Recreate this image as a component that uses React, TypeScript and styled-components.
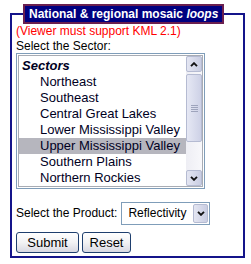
import React from "react";
import styled, { createGlobalStyle } from "styled-components";

const Global = createGlobalStyle`
  html, body { margin: 0; padding: 0; background: #fff; }
  body { font-family: "Liberation Sans", Arial, sans-serif; color: #000; }
`;

const Page = styled.div`
  box-sizing: border-box;
  width: 251px;
  height: 264px;
  padding: 4px 0 0 10px;
`;

const Frame = styled.fieldset`
  box-sizing: border-box;
  width: 235px;
  margin: 0;
  padding: 0 4px 3px 4px;
  border: 2px solid #14148a;
  min-inline-size: 0;
`;

const Legend = styled.legend`
  box-sizing: border-box;
  height: 20px;
  margin-left: 7px;
  padding: 0 4px;
  background: #000080;
  border: 2px solid #6b1f4f;
  color: #fff;
  font-weight: bold;
  font-size: 12px;
  line-height: 16px;
  white-space: nowrap;
`;

const Note = styled.div<{ $tone?: "warn"; $lh?: number }>`
  font-size: 12px;
  line-height: ${(p) => p.$lh ?? 15}px;
  color: ${(p) => (p.$tone === "warn" ? "#f00" : "#000")};
`;

const ListBox = styled.div`
  box-sizing: border-box;
  width: 189px;
  height: 136px;
  border: 1px solid #7f9db9;
  padding: 1px;
  display: flex;
`;

const ListInner = styled.div`
  flex: 1;
  display: flex;
  border: 1px solid #a8acb4;
  min-width: 0;
`;

const Rows = styled.div`
  flex: 1;
  padding-top: 2px;
  overflow: hidden;
`;

const Row = styled.div<{ $kind?: "group" | "item"; $selected?: boolean }>`
  height: 16px;
  line-height: 16px;
  font-size: 13px;
  white-space: nowrap;
  padding-left: ${(p) => (p.$kind === "group" ? "3px" : "21px")};
  font-weight: ${(p) => (p.$kind === "group" ? "bold" : "normal")};
  font-style: ${(p) => (p.$kind === "group" ? "italic" : "normal")};
  background: ${(p) => (p.$selected ? "#b6b6be" : "transparent")};
  color: #00001e;
`;

const Scrollbar = styled.div`
  width: 16px;
  display: flex;
  flex-direction: column;
  background: linear-gradient(to right, #eeeef4, #f8f8fb);
`;

const ArrowButton = styled.div`
  box-sizing: border-box;
  width: 16px;
  height: 16px;
  border: 1px solid #b5bbd2;
  border-radius: 2px;
  background: linear-gradient(to right, #e4e6f2, #c9cde2);
  display: flex;
  align-items: center;
  justify-content: center;
`;

const Track = styled.div`
  flex: 1;
  display: flex;
  flex-direction: column;
  padding: 2px 0;
`;

const Thumb = styled.div`
  box-sizing: border-box;
  height: 68px;
  border: 1px solid #b5bbd2;
  border-radius: 2px;
  background: linear-gradient(to right, #e6e8f4, #cdd1e6);
  display: flex;
  align-items: center;
  justify-content: center;
`;

const Grip = styled.div`
  width: 7px;
  height: 7px;
  background: repeating-linear-gradient(
    to bottom,
    #9ea4bc 0 1px,
    transparent 1px 2px
  );
`;

const ProductRow = styled.div`
  display: flex;
  align-items: center;
  gap: 4px;
  margin-top: 13px;
`;

const SelectBox = styled.div`
  box-sizing: border-box;
  width: 89px;
  height: 23px;
  border: 1px solid #7f9db9;
  padding: 1px;
  display: flex;
  align-items: stretch;
`;

const SelectText = styled.div`
  flex: 1;
  font-size: 12px;
  line-height: 19px;
  padding-left: 5px;
  color: #000;
`;

const DropButton = styled(ArrowButton)`
  width: 15px;
  height: auto;
`;

const Buttons = styled.div`
  display: flex;
  gap: 3px;
  margin-top: 7px;
`;

const Button = styled.button<{ $w: number }>`
  box-sizing: border-box;
  width: ${(p) => p.$w}px;
  height: 21px;
  padding: 0;
  border: 1px solid #1f3f6e;
  border-radius: 3px;
  background: linear-gradient(to bottom, #ffffff 0%, #f2f2f4 50%, #d8d8e2 100%);
  font-family: "Liberation Sans", Arial, sans-serif;
  font-size: 13px;
  color: #000;
`;

const Chevron = ({ dir }: { dir: "up" | "down" }) => (
  <svg width="8" height="5" viewBox="0 0 8 5">
    <path
      d={dir === "up" ? "M1 4.2 L4 1.2 L7 4.2" : "M1 0.8 L4 3.8 L7 0.8"}
      fill="none"
      stroke="#111"
      strokeWidth="1.9"
    />
  </svg>
);

const sectors = [
  "Northeast",
  "Southeast",
  "Central Great Lakes",
  "Lower Mississippi Valley",
  "Upper Mississippi Valley",
  "Southern Plains",
  "Northern Rockies",
];

export default function App() {
  return (
    <>
      <Global />
      <Page>
        <Frame>
          <Legend>
            National &amp; regional mosaic <i>loops</i>
          </Legend>
          <Note $tone="warn">(Viewer must support KML 2.1)</Note>
          <Note $lh={14}>Select the Sector:</Note>
          <ListBox>
            <ListInner>
              <Rows>
                <Row $kind="group">Sectors</Row>
                {sectors.map((s) => (
                  <Row key={s} $selected={s === "Upper Mississippi Valley"}>
                    {s}
                  </Row>
                ))}
              </Rows>
              <Scrollbar>
                <ArrowButton>
                  <Chevron dir="up" />
                </ArrowButton>
                <Track>
                  <Thumb>
                    <Grip />
                  </Thumb>
                </Track>
                <ArrowButton>
                  <Chevron dir="down" />
                </ArrowButton>
              </Scrollbar>
            </ListInner>
          </ListBox>
          <ProductRow>
            <Note>Select the Product:</Note>
            <SelectBox>
              <SelectText>Reflectivity</SelectText>
              <DropButton>
                <Chevron dir="down" />
              </DropButton>
            </SelectBox>
          </ProductRow>
          <Buttons>
            <Button $w={63}>Submit</Button>
            <Button $w={49}>Reset</Button>
          </Buttons>
        </Frame>
      </Page>
    </>
  );
}
